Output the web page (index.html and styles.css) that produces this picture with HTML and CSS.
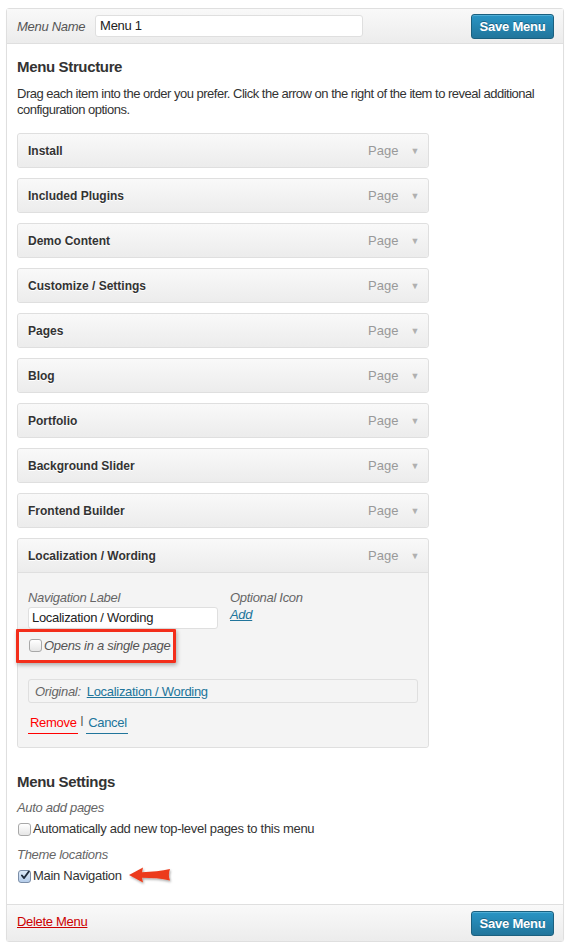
FILE: index.html
```html
<!DOCTYPE html>
<html>
<head>
<meta charset="utf-8">
<link rel="stylesheet" href="styles.css">
</head>
<body>
<div class="frame">
  <div class="bar bar-top">
    <label class="menu-name">Menu Name</label>
    <div class="name-input">Menu 1</div>
    <span class="spacer"></span>
    <button class="btn-primary">Save Menu</button>
  </div>
  <div class="content">
    <h3 class="heading">Menu Structure</h3>
    <p class="desc">Drag each item into the order you prefer. Click the arrow on the right of the item to reveal additional configuration options.</p>
    <ul class="items">
      <li class="item"><div class="item-bar"><span class="item-title">Install</span><span class="item-type">Page</span><span class="item-arrow">&#9660;</span></div></li>
      <li class="item"><div class="item-bar"><span class="item-title">Included Plugins</span><span class="item-type">Page</span><span class="item-arrow">&#9660;</span></div></li>
      <li class="item"><div class="item-bar"><span class="item-title">Demo Content</span><span class="item-type">Page</span><span class="item-arrow">&#9660;</span></div></li>
      <li class="item"><div class="item-bar"><span class="item-title">Customize / Settings</span><span class="item-type">Page</span><span class="item-arrow">&#9660;</span></div></li>
      <li class="item"><div class="item-bar"><span class="item-title">Pages</span><span class="item-type">Page</span><span class="item-arrow">&#9660;</span></div></li>
      <li class="item"><div class="item-bar"><span class="item-title">Blog</span><span class="item-type">Page</span><span class="item-arrow">&#9660;</span></div></li>
      <li class="item"><div class="item-bar"><span class="item-title">Portfolio</span><span class="item-type">Page</span><span class="item-arrow">&#9660;</span></div></li>
      <li class="item"><div class="item-bar"><span class="item-title">Background Slider</span><span class="item-type">Page</span><span class="item-arrow">&#9660;</span></div></li>
      <li class="item"><div class="item-bar"><span class="item-title">Frontend Builder</span><span class="item-type">Page</span><span class="item-arrow">&#9660;</span></div></li>
      <li class="item item-open">
        <div class="item-bar item-bar-open"><span class="item-title">Localization / Wording</span><span class="item-type">Page</span><span class="item-arrow">&#9660;</span></div>
        <div class="item-settings">
          <div class="fields">
            <div class="field-nav">
              <div class="field-label">Navigation Label</div>
              <div class="text-input">Localization / Wording</div>
            </div>
            <div class="field-icon">
              <div class="field-label">Optional Icon</div>
              <a class="add-link">Add</a>
            </div>
          </div>
          <div class="single-row">
            <span class="cb"></span><span class="single-label">Opens in a single page</span>
            <span class="highlight"></span>
          </div>
          <div class="original"><span class="orig-label">Original:</span><a class="orig-link">Localization / Wording</a></div>
          <div class="actions"><a class="remove">Remove</a><span class="sep">|</span><a class="cancel">Cancel</a></div>
        </div>
      </li>
    </ul>
    <h3 class="heading heading-settings">Menu Settings</h3>
    <div class="set-label">Auto add pages</div>
    <div class="check-row"><span class="cb"></span><span>Automatically add new top-level pages to this menu</span></div>
    <div class="set-label set-label-2">Theme locations</div>
    <div class="check-row">
      <span class="cb cb-checked"><svg width="13" height="13" viewBox="0 0 13 13"><path d="M2.5 6.5 L5.3 9.8 L11.5 1.2" fill="none" stroke="#1d2a3a" stroke-width="2.4" stroke-linecap="round" stroke-linejoin="round"/></svg></span>
      <span>Main Navigation</span>
      <svg class="pointer" width="46" height="20" viewBox="0 0 46 20"><defs><filter id="sh" x="-20%" y="-30%" width="150%" height="170%"><feDropShadow dx="1" dy="1.5" stdDeviation="1.2" flood-color="#000" flood-opacity="0.35"/></filter></defs><path d="M1 9 L15 1.5 L14 6.3 C24 5.8 34 5 42 3 C40.5 7 40.5 11 42 14.5 C34 12.2 24 11.8 14 11.7 L15 16.5 Z" fill="#ec3b1c" filter="url(#sh)"/></svg>
    </div>
  </div>
  <div class="bar bar-bottom">
    <a class="delete">Delete Menu</a>
    <span class="spacer"></span>
    <button class="btn-primary">Save Menu</button>
  </div>
</div>
</body>
</html>
```
FILE: styles.css
```css
* { box-sizing: border-box; }
html, body { margin: 0; padding: 0; background: #fff; }
body {
  font-family: "Liberation Sans", Arial, Helvetica, sans-serif;
  font-size: 13px;
  letter-spacing: -0.3px;
  color: #333;
}
.frame {
  margin: 8px 6px 0 6px;
  border: 1px solid #dfdfdf;
  border-radius: 3px;
  height: 934px;
  display: flex;
  flex-direction: column;
  box-shadow: 0 1px 1px rgba(0,0,0,0.04);
}
.bar {
  display: flex;
  align-items: center;
  padding: 0 9px 0 10px;
  background: linear-gradient(#f9f9f9, #ececec);
}
.bar-top {
  height: 35px;
  border-bottom: 1px solid #dfdfdf;
}
.bar-bottom {
  height: 37px;
  border-top: 1px solid #dfdfdf;
  margin-top: auto;
}
.spacer { flex: 1; }
.menu-name {
  font-style: italic;
  color: #555;
  font-size: 13px;
}
.name-input {
  margin-left: 10px;
  width: 268px;
  height: 22px;
  border: 1px solid #dfdfdf;
  border-radius: 3px;
  background: #fff;
  padding: 0 4px;
  line-height: 20px;
  color: #222;
  font-size: 13px;
}
.btn-primary {
  width: 83px;
  height: 25px;
  border: 1px solid #1b607f;
  border-radius: 3px;
  background: linear-gradient(#2a95c5, #21759b);
  color: #fff;
  font-family: "Liberation Sans", Arial, sans-serif;
  font-size: 13px;
  font-weight: bold;
  letter-spacing: -0.2px;
  padding: 0;
  text-shadow: 0 -1px 0 rgba(0,0,0,0.3);
  box-shadow: inset 0 1px 0 rgba(120,200,230,0.5);
}
.content {
  padding: 0 10px;
}
.heading {
  margin: 14px 0 0;
  font-size: 15px;
  line-height: 18px;
  font-weight: bold;
  letter-spacing: -0.35px;
  color: #333;
}
.desc {
  margin: 10px 0 0;
  line-height: 16px;
  font-size: 13px;
  letter-spacing: -0.5px;
  color: #333;
}
.items {
  list-style: none;
  margin: 15px 0 0;
  padding: 0;
  width: 412px;
  display: flex;
  flex-direction: column;
  gap: 10px;
}
.item {
  border: 1px solid #dfdfdf;
  border-radius: 3px;
  background: #f5f5f5;
}
.item-bar {
  height: 33px;
  display: flex;
  align-items: center;
  padding: 0 9px 0 10px;
  background: linear-gradient(#f9f9f9, #ececec);
  border-radius: 3px;
}
.item-bar-open {
  height: 34px;
  border-bottom: 1px solid #dfdfdf;
  border-radius: 3px 3px 0 0;
}
.item-title {
  flex: 1;
  font-weight: bold;
  font-size: 12px;
  letter-spacing: 0;
  color: #333;
  text-shadow: 0 1px 0 #fff;
}
.item-type {
  color: #999;
  font-size: 13px;
  margin-right: 12px;
  letter-spacing: 0;
}
.item-arrow {
  color: #b0b0b0;
  font-size: 9px;
  margin-top: 1px;
}
.item-settings {
  padding: 17px 10px 13px 10px;
  background: #f4f4f4;
  border-radius: 0 0 3px 3px;
}
.fields {
  display: flex;
  gap: 12px;
}
.field-nav { width: 190px; }
.field-label {
  font-style: italic;
  color: #666;
  line-height: 16px;
  font-size: 13px;
}
.text-input {
  margin-top: 1px;
  height: 22px;
  border: 1px solid #dfdfdf;
  border-radius: 3px;
  background: #fff;
  padding: 0 3px;
  line-height: 20px;
  color: #222;
}
.add-link {
  display: block;
  font-style: italic;
  color: #21759b;
  text-decoration: underline;
  line-height: 16px;
  margin-top: 1px;
}
.single-row {
  position: relative;
  display: flex;
  align-items: center;
  height: 20px;
  margin-top: 6px;
}
.single-label {
  font-style: italic;
  color: #555;
}
.highlight {
  position: absolute;
  left: -12px;
  top: -6px;
  width: 160px;
  height: 34px;
  border: 3px solid #f32e1b;
  border-radius: 1px;
  box-shadow: 1px 2px 4px rgba(0,0,0,0.3);
}
.cb {
  display: inline-flex;
  align-items: center;
  justify-content: center;
  width: 13px;
  height: 13px;
  border: 1px solid #a8a8a8;
  border-radius: 3px;
  background: linear-gradient(#ffffff, #e6e6e6);
  margin: 0 2px 0 1px;
  flex: none;
}
.cb-checked {
  background: linear-gradient(#dce9f8, #b5cdea);
  border-color: #7b8ea8;
  overflow: visible;
}
.cb-checked svg { margin-top: -2px; margin-left: 1px; }
.original {
  margin-top: 24px;
  height: 24px;
  border: 1px solid #dfdfdf;
  border-radius: 3px;
  display: flex;
  align-items: center;
  padding: 0 6px;
}
.orig-label {
  font-style: italic;
  color: #666;
  margin-right: 6px;
}
.orig-link {
  color: #21759b;
  text-decoration: underline;
}
.actions {
  margin-top: 12px;
  display: flex;
  align-items: flex-start;
  line-height: 16px;
}
.remove {
  color: #f00;
  border-bottom: 1px solid #f00;
  padding: 0 1px 2px 2px;
}
.sep {
  color: #333;
  margin: -3px 3px 0 3px;
  font-size: 11px;
}
.cancel {
  color: #21759b;
  border-bottom: 1px solid #21759b;
  padding: 0 1px 2px 2px;
}
.heading-settings { margin-top: 25px; }
.set-label {
  margin-top: 9px;
  font-style: italic;
  color: #666;
  line-height: 16px;
}
.set-label-2 { margin-top: 10px; }
.check-row {
  margin-top: 5px;
  display: flex;
  align-items: center;
  height: 16px;
  line-height: 16px;
  color: #333;
}
.pointer {
  margin: -2px 0 -2px 6px;
}
.delete {
  color: #c00;
  text-decoration: underline;
  margin-bottom: 3px;
}
```
